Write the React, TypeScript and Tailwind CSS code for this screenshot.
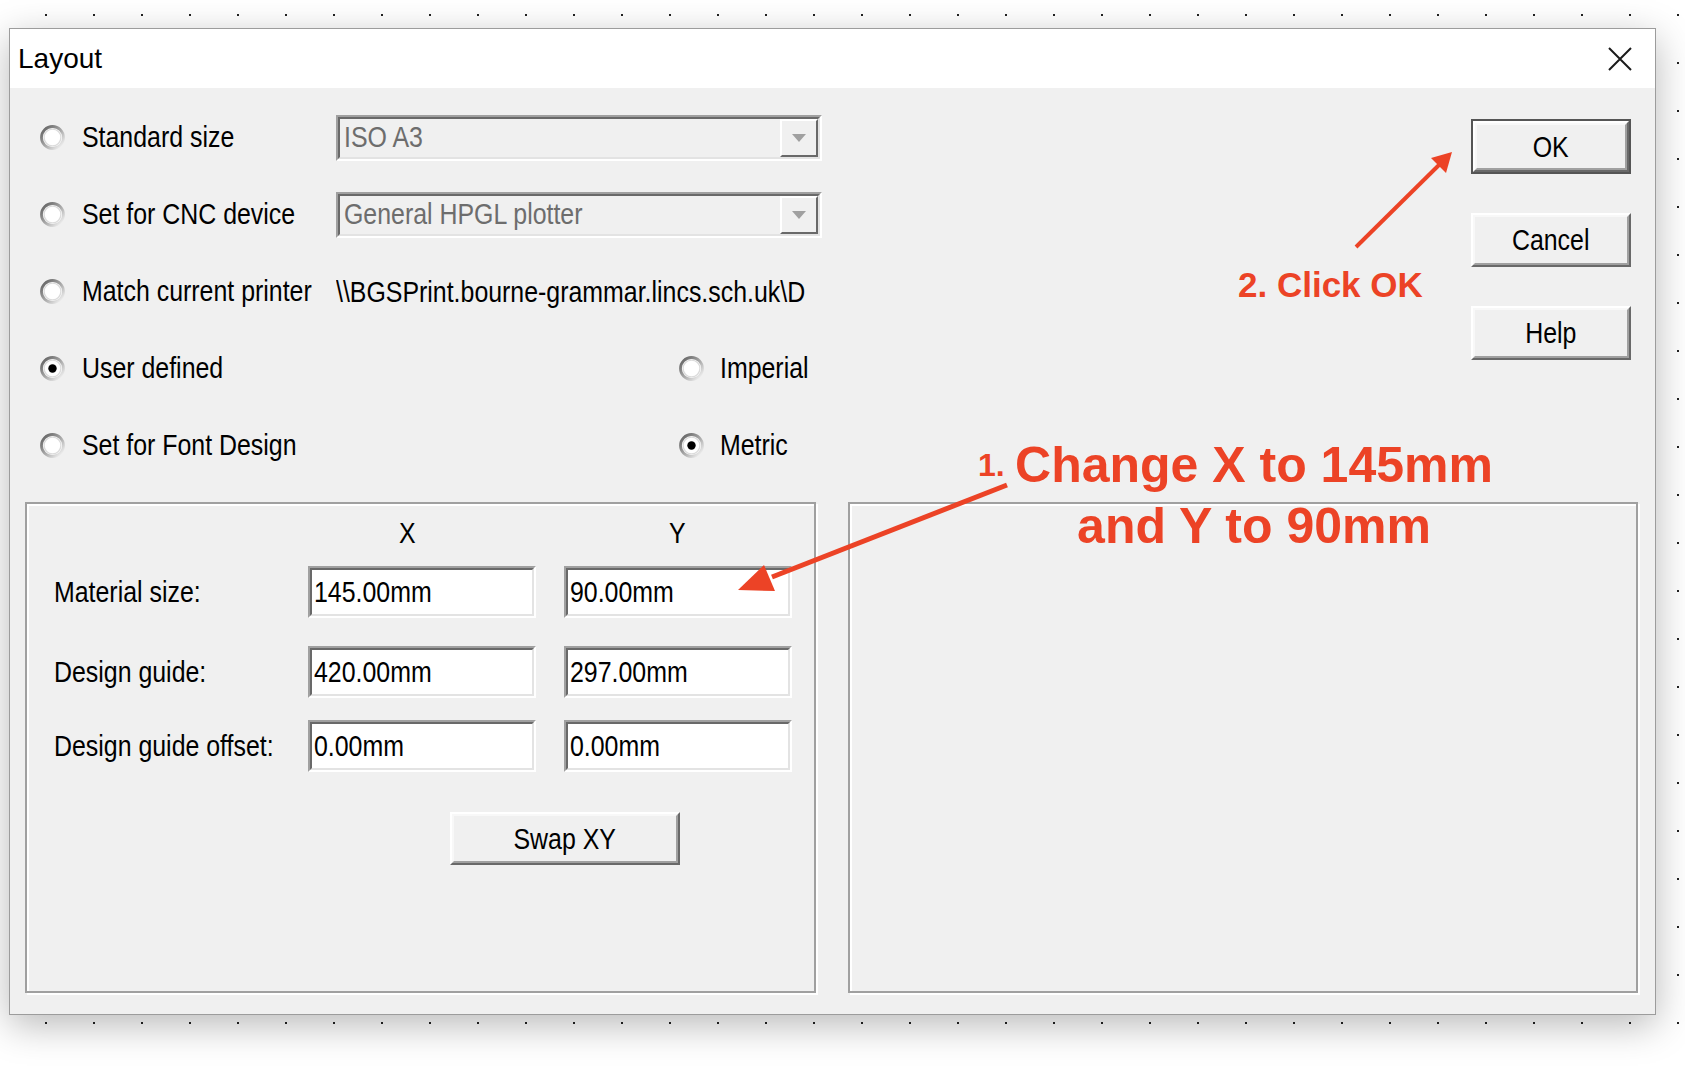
import React from "react";

function T({
  children,
  center = false,
  grey = false,
}: {
  children: React.ReactNode;
  center?: boolean;
  grey?: boolean;
}) {
  return (
    <span
      className={`inline-block whitespace-nowrap text-[30px] leading-none font-['Liberation_Sans',sans-serif] scale-x-[0.83] ${
        center ? "origin-center" : "origin-left"
      } ${grey ? "text-[#6d6d6d]" : "text-black"}`}
    >
      {children}
    </span>
  );
}

function Radio({ checked = false }: { checked?: boolean }) {
  const id = checked ? "rgc" : "rg";
  return (
    <svg width="25" height="25" viewBox="0 0 25 25" className="shrink-0">
      <defs>
        <linearGradient id={id} x1="0" y1="0" x2="1" y2="1">
          <stop offset="0" stopColor="#5a5a5a" />
          <stop offset="0.55" stopColor="#adadad" />
          <stop offset="1" stopColor="#ffffff" />
        </linearGradient>
      </defs>
      <circle cx="12.5" cy="12.5" r="11" fill="#ffffff" stroke={`url(#${id})`} strokeWidth="2.8" />
      <circle cx="12.5" cy="12.5" r="8.4" fill="none" stroke="#dcdcdc" strokeWidth="1.3" />
      {checked && <circle cx="12.5" cy="12.5" r="4.2" fill="#000000" />}
    </svg>
  );
}

function Sunken({ className = "", children }: { className?: string; children?: React.ReactNode }) {
  return (
    <div className={"border-2 border-t-[#a0a0a0] border-l-[#a0a0a0] border-b-white border-r-white " + className}>
      <div className="w-full h-full border-2 border-t-[#696969] border-l-[#696969] border-b-[#e3e3e3] border-r-[#e3e3e3] flex items-center">
        {children}
      </div>
    </div>
  );
}

function Combo({ text }: { text: string }) {
  return (
    <Sunken className="w-[486px] h-[46px] bg-[#f0f0f0]">
      <div className="flex-1 pl-[4px]">
        <T grey>{text}</T>
      </div>
      <div className="h-full w-[38px] border-2 border-t-white border-l-white border-b-[#696969] border-r-[#696969] bg-[#f0f0f0] flex items-center justify-center">
        <svg width="18" height="10" viewBox="0 0 18 10">
          <polygon points="2,1 16,1 9,9" fill="#a0a0a0" />
        </svg>
      </div>
    </Sunken>
  );
}

function Field({ value }: { value: string }) {
  return (
    <Sunken className="w-[228px] h-[52px] bg-white">
      <div className="pl-[2px]">
        <T>{value}</T>
      </div>
    </Sunken>
  );
}

function Button({ label, isDefault = false, className = "" }: { label: string; isDefault?: boolean; className?: string }) {
  const inner = (
    <div className="w-full h-full border-2 border-t-white border-l-white border-b-[#696969] border-r-[#696969]">
      <div className="w-full h-full border-2 border-t-[#f8f8f8] border-l-[#f8f8f8] border-b-[#a0a0a0] border-r-[#a0a0a0] bg-[#f0f0f0] flex items-center justify-center">
        <T center>{label}</T>
      </div>
    </div>
  );
  if (isDefault) {
    return <div className={"border-2 border-[#555555] " + className}>{inner}</div>;
  }
  return <div className={className}>{inner}</div>;
}

function Etched({ className = "", children }: { className?: string; children?: React.ReactNode }) {
  return (
    <div className={"border-2 border-[#a0a0a0] shadow-[inset_2px_2px_0_#ffffff,2px_2px_0_#ffffff] " + className}>{children}</div>
  );
}

function Row({ checked, label, children }: { checked?: boolean; label: string; children?: React.ReactNode }) {
  return (
    <div className="h-[77px] flex items-center pl-[30px]">
      <Radio checked={checked} />
      <div className="ml-[17px] w-[254px]">
        <T>{label}</T>
      </div>
      <div className="w-[486px] flex items-center">{children}</div>
    </div>
  );
}

function Unit({ checked, label }: { checked?: boolean; label: string }) {
  return (
    <div className="pl-[343px] flex items-center">
      <Radio checked={checked} />
      <div className="ml-[16px]">
        <T>{label}</T>
      </div>
    </div>
  );
}

function FieldRow({ label, x, y, className = "" }: { label: string; x: string; y: string; className?: string }) {
  return (
    <div className={"flex items-center " + className}>
      <div className="w-[254px]">
        <T>{label}</T>
      </div>
      <Field value={x} />
      <div className="ml-[28px]">
        <Field value={y} />
      </div>
    </div>
  );
}

export default function App() {
  const red = "#ec4326";
  return (
    <div className="relative w-[1685px] h-[1067px] overflow-hidden bg-white">
      <svg className="absolute inset-0" width="1685" height="1067">
        <defs>
          <pattern id="dots" width="48" height="48" patternUnits="userSpaceOnUse">
            <rect x="45" y="14" width="2" height="2" fill="#222222" />
          </pattern>
        </defs>
        <rect width="1685" height="1067" fill="url(#dots)" />
      </svg>

      <div className="relative ml-[9px] pt-[28px] w-[1647px]">
        <div className="h-[987px] border border-[#9c9c9c] bg-[#f0f0f0] shadow-[0_10px_36px_rgba(0,0,0,0.28)] flex flex-col">
          {/* Title bar */}
          <div className="h-[59px] bg-white flex items-center justify-between pl-[8px] pr-[23px]">
            <span className="text-[28px] leading-none text-black font-['Liberation_Sans',sans-serif]">Layout</span>
            <svg width="24" height="24" viewBox="0 0 24 24">
              <path d="M1 1 L23 23 M23 1 L1 23" stroke="#1a1a1a" strokeWidth="2" />
            </svg>
          </div>

          {/* Top section */}
          <div className="h-[414px] flex">
            <div className="pt-[11px]">
              <Row label="Standard size">
                <Combo text="ISO A3" />
              </Row>
              <Row label="Set for CNC device">
                <Combo text="General HPGL plotter" />
              </Row>
              <Row label="Match current printer">
                <T>\\BGSPrint.bourne-grammar.lincs.sch.uk\D</T>
              </Row>
              <Row checked label="User defined">
                <Unit label="Imperial" />
              </Row>
              <Row label="Set for Font Design">
                <Unit checked label="Metric" />
              </Row>
            </div>
            <div className="ml-auto mr-[24px] pt-[31px] flex flex-col gap-[39px]">
              <Button label="OK" isDefault className="w-[160px] h-[55px]" />
              <Button label="Cancel" className="w-[160px] h-[54px]" />
              <Button label="Help" className="w-[160px] h-[54px]" />
            </div>
          </div>

          {/* Group boxes */}
          <div className="h-[491px] flex gap-[32px] pl-[15px] pr-[17px]">
            <Etched className="w-[791px] h-full pl-[27px] pt-[11px]">
              <div className="h-[36px] flex items-center">
                <div className="w-[254px]" />
                <div className="w-[228px] pl-[91px]">
                  <T>X</T>
                </div>
                <div className="ml-[28px] w-[228px] pl-[105px]">
                  <T>Y</T>
                </div>
              </div>
              <FieldRow className="mt-[15px]" label="Material size:" x="145.00mm" y="90.00mm" />
              <FieldRow className="mt-[28px]" label="Design guide:" x="420.00mm" y="297.00mm" />
              <FieldRow className="mt-[22px]" label="Design guide offset:" x="0.00mm" y="0.00mm" />
              <div className="mt-[40px] pl-[396px]">
                <Button label="Swap XY" className="w-[230px] h-[53px]" />
              </div>
            </Etched>
            <Etched className="w-[790px] h-full" />
          </div>
        </div>
      </div>

      {/* Annotations overlay */}
      <svg className="absolute inset-0 pointer-events-none" width="1685" height="1067">
        <line x1="1007" y1="485" x2="772" y2="577" stroke={red} strokeWidth="5" />
        <polygon points="738,590 775,591 764,565" fill={red} />
        <line x1="1356" y1="247" x2="1440" y2="164" stroke={red} strokeWidth="4" />
        <polygon points="1452,152 1431,158 1446,173" fill={red} />
      </svg>
      <div
        className="absolute left-[1238px] top-[267px] text-[35px] leading-none font-bold whitespace-nowrap font-['Liberation_Sans',sans-serif]"
        style={{ color: red }}
      >
        2. Click OK
      </div>
      <div
        className="absolute left-[978px] top-[449px] text-[32px] leading-none font-bold font-['Liberation_Sans',sans-serif]"
        style={{ color: red }}
      >
        1.
      </div>
      <div
        className="absolute left-[1004px] top-[435px] w-[500px] text-center text-[50px] leading-[61px] font-bold font-['Liberation_Sans',sans-serif]"
        style={{ color: red }}
      >
        <div>Change X to 145mm</div>
        <div>and Y to 90mm</div>
      </div>
    </div>
  );
}
